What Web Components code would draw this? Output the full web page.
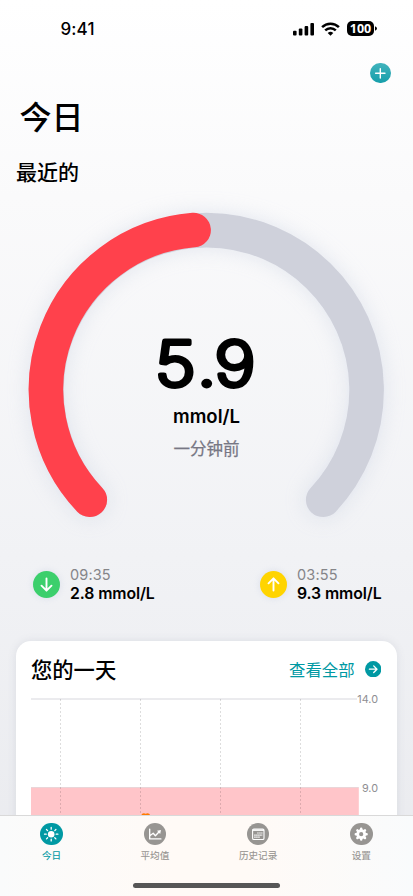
<!DOCTYPE html>
<html lang="zh-CN">
<head>
<meta charset="utf-8">
<meta name="viewport" content="width=device-width">
<title>今日</title>
<style>
html,body{margin:0;height:896px;overflow:hidden}
body{font-family:Inter,"Noto Sans CJK SC",sans-serif;color:#000}
</style>
</head>
<body>
<glucose-app></glucose-app>
<script>
function define(name, html){
  const t=document.createElement('template');
  t.innerHTML=html;
  customElements.define(name,class extends HTMLElement{
    constructor(){super();this.attachShadow({mode:'open'}).append(t.content.cloneNode(true));}
  });
}

define('status-bar',`<style>
:host{display:flex;height:56px;box-sizing:border-box;padding:1px 36px 0 60.5px;align-items:center;justify-content:space-between;font:600 17px/20px Inter,sans-serif}
.time{letter-spacing:.1px;font-weight:550}
.right{display:flex;align-items:center;gap:7px}
.bat{display:flex;align-items:center;gap:1px}
.cell{width:27px;height:15px;border-radius:5px;background:#000;color:#fff;font:700 12.5px/15px "Noto Sans",Inter,sans-serif;text-align:center}
svg{display:block}
</style>
<span class="time">9:41</span>
<div class="right">
<svg width="21" height="14" viewBox="0 0 21 14"><rect x="0" y="8.8" width="3.6" height="4.7" rx="1"/><rect x="5.8" y="6.6" width="3.6" height="6.9" rx="1"/><rect x="11.6" y="4" width="3.6" height="9.5" rx="1"/><rect x="17.4" y="1" width="3.6" height="12.5" rx="1"/></svg>
<svg width="19" height="14" viewBox="0 0 19 14"><g fill="none" stroke="#000" stroke-width="2.5"><path d="M1.1 5.1a12 12 0 0 1 16.8 0"/><path d="M4.2 8.3a7.6 7.6 0 0 1 10.6 0"/></g><path d="M9.5 13.8 6.7 11a4 4 0 0 1 5.6 0z"/></svg>
<div class="bat"><div class="cell">100</div><svg width="2" height="5" viewBox="0 0 2 5"><path d="M0 .3Q2 1 2 2.5T0 4.7z"/></svg></div>
</div>`);

define('add-button',`<style>
:host{display:block;width:20.6px;height:20.6px;border-radius:50%;background:linear-gradient(#42b4bd,#169eaa)}
svg{display:block}
</style><svg width="20.6" height="20.6" viewBox="0 0 20.6 20.6"><path d="M10.3 5.6v9.4M5.6 10.3h9.4" stroke="#fff" stroke-width="1.4" stroke-linecap="round"/></svg>`);

define('glucose-gauge',`<style>
:host{display:grid;height:340px}
svg,.label{grid-area:1/1}
svg{display:block;overflow:visible}
.arcs{filter:drop-shadow(0 0 10px rgba(180,190,215,.33))}
.label{display:flex;flex-direction:column;align-items:center;padding-top:129px}
.value{font-family:Inter,sans-serif;font-size:61.5px;font-weight:200;font-optical-sizing:none}
.unit{font-weight:600;font-size:18.5px;line-height:24px;margin-top:1px}
.when{font-size:16.5px;line-height:24px;margin-top:9.5px;color:#777784;-webkit-text-stroke:.25px #777784}
</style>
<svg class="arcs" width="413" height="340" viewBox="0 200 413 340"><g fill="none" stroke-width="34.6" stroke-linecap="round"><path d="M89.8 499.8A160.1 160.1 0 1 1 323.2 499.8" stroke="#cfd1db"/><path d="M89.8 499.8A160.1 160.1 0 0 1 193.6 230.1" stroke="#ff414c"/></g></svg>
<div class="label">
<svg width="120" height="74" viewBox="0 0 120 74"><text class="value" transform="scale(1.14 1)" x="7.1 43.8 59.3" y="57.2" stroke="#000" stroke-width="4.8" stroke-linejoin="round">5.9</text></svg>
<span class="unit"><slot name="unit"></slot></span><span class="when"><slot name="when"></slot></span></div>`);

define('reading-item',`<style>
:host{display:flex;align-items:center;gap:10px;width:122px}
.dot{width:27px;height:27px;border-radius:50%;background:var(--dot);flex:none;box-shadow:0 0 6px rgba(170,180,215,.3)}
svg{display:block;transform:rotate(var(--turn,0deg))}
.text{white-space:nowrap}
.time{color:#858589;font-size:14.5px;line-height:18px;letter-spacing:.15px}
.value{font-size:15.8px;line-height:18px;font-weight:600;letter-spacing:-.1px;padding-top:1px;margin-bottom:-1px}
</style><div class="dot"><svg width="27" height="27" viewBox="0 0 27 27"><path d="M13.5 7.4v12M8.5 14.7l5 5 5-5" fill="none" stroke="#fff" stroke-width="1.9" stroke-linecap="round" stroke-linejoin="round"/></svg></div>
<div class="text"><div class="time"><slot name="time"></slot></div><div class="value"><slot></slot></div></div>`);

define('day-chart',`<style>
:host{display:block}svg{display:block}text{font-family:Inter,sans-serif;font-size:10.8px;fill:#8e8e92}
</style><svg width="350" height="130" viewBox="31 690 350 130">
<path d="M31 699H357" stroke="#e5e5e8" stroke-width="1.6"/>
<rect x="31" y="787.7" width="327.8" height="40" fill="#ffc5c9"/>
<path d="M31 787.5H358.8" stroke="#e4ced2" stroke-width=".8"/>
<path d="M60.5 699V820M140.5 699V820M220.5 699V820M300.5 699V820" stroke="#000" stroke-opacity=".17" stroke-width=".8" stroke-dasharray="2 2"/>
<circle cx="143.9" cy="815.8" r="2.6" fill="#ff7a00"/><circle cx="147.5" cy="815.8" r="2.6" fill="#ff7a00"/>
<text x="378" y="702.9" text-anchor="end">14.0</text><text x="378" y="791.5" text-anchor="end">9.0</text></svg>`);

define('day-card',`<style>
:host{display:block;height:260px;border-radius:15px;background:#fff;box-shadow:0 0 8px rgba(100,105,130,.13);padding:14px 15px 0;box-sizing:border-box}
header{display:flex;justify-content:space-between;align-items:center;height:28px;margin-bottom:7px}
.title{font-size:21.3px;font-weight:500}
.all{display:flex;align-items:center;gap:10px;color:#0099a3;font-size:16.4px}
svg{display:block;margin:1px 1px 0 0}
</style><header><span class="title"><slot name="title"></slot></span><span class="all"><slot name="link"></slot><svg width="16.4" height="16.4" viewBox="0 0 16.4 16.4"><circle cx="8.2" cy="8.2" r="8.2" fill="#0099a3"/><path d="M4.4 8.2h7.6M8.7 4.9 12 8.2l-3.3 3.3" fill="none" stroke="#fff" stroke-width="1.3" stroke-linecap="round" stroke-linejoin="round"/></svg></span></header><slot></slot>`);

define('tab-item',`<style>
:host{display:flex;flex:1;flex-direction:column;align-items:center;color:var(--tab,#979592);gap:3px}
.icon{width:22.4px;height:22.4px;border-radius:50%;background:var(--tab,#979592)}
.name{font-size:9.6px;line-height:16px;-webkit-text-stroke:.12px}
::slotted(svg){display:block;width:22.4px;height:22.4px}
</style><div class="icon"><slot name="icon"></slot></div><span class="name"><slot></slot></span>`);

define('tab-bar',`<style>
:host{display:block;height:81px;box-sizing:border-box;border-top:1px solid #d9d9d9;background:linear-gradient(90deg,#fafbfb,#fffaf6 42%,#fffaf6 60%,#f9fbfc);padding-top:6.5px}
nav{display:flex;height:50px}
.home{width:147px;height:4.6px;border-radius:3px;background:#565656;margin:10.8px auto 0}
</style><nav><slot></slot></nav><div class="home"></div>`);

define('glucose-app',`<style>
:host{display:grid;grid-template-rows:815px 81px;width:413px;height:896px;overflow:hidden;background:linear-gradient(#fff,#fafafb 22%,#f1f2f5 62%,#e9eaee)}
main{overflow:hidden;min-height:0}
.add{display:flex;justify-content:flex-end;padding:6.5px 22px 0 0;height:27.5px;box-sizing:border-box}
h1{margin:14px 0 0 19.5px;font-size:32px;line-height:40px;font-weight:500}
h2{margin:21.5px 0 0 16px;font-size:21px;line-height:28px;font-weight:500}
glucose-gauge{margin-top:12.5px}
.readings{display:flex;justify-content:space-between;padding:26.5px 31px 0 33px}
day-card{margin:38.5px 16px 0}
</style>
<main><status-bar></status-bar><div class="add"><add-button></add-button></div>
<h1>今日</h1><h2>最近的</h2>
<glucose-gauge><span slot="unit">mmol/L</span><span slot="when">一分钟前</span></glucose-gauge>
<div class="readings"><reading-item style="--dot:#3ccf6c"><span slot="time">09:35</span>2.8 mmol/L</reading-item><reading-item style="--dot:#ffd400;--turn:180deg"><span slot="time">03:55</span>9.3 mmol/L</reading-item></div>
<day-card><span slot="title">您的一天</span><span slot="link">查看全部</span><day-chart></day-chart></day-card></main>
<tab-bar>
<tab-item style="--tab:#0099a3"><svg slot="icon" viewBox="0 0 22.4 22.4"><circle cx="11.2" cy="11.2" r="3.3" fill="#fff"/><path d="M11.2 4.5v1.7M11.2 16.2v1.7M4.5 11.2h1.7M16.2 11.2h1.7M6.5 6.5l1.1 1.1M14.8 14.8l1.1 1.1M6.5 15.9l1.1-1.1M14.8 7.6l1.1-1.1" stroke="#fff" stroke-width="1.3" stroke-linecap="round"/></svg>今日</tab-item>
<tab-item><svg slot="icon" viewBox="0 0 22.4 22.4"><path d="M5.7 6.1v9.8h11.2M6.5 12.2l2.7-2 2.2 2.6 4-4.3" fill="none" stroke="#fff" stroke-width="1.35" stroke-linecap="round" stroke-linejoin="round"/><path d="M13 7.7 17 6.9 16.2 10.9z" fill="#fff"/></svg>平均值</tab-item>
<tab-item><svg slot="icon" viewBox="0 0 22.4 22.4"><rect x="5.6" y="6" width="11.4" height="10.5" rx="1.3" fill="none" stroke="#fff" stroke-width="1.1"/><path d="M5.6 7.1h11.4" stroke="#fff" stroke-width="1.6"/><path d="M10.2 10h5.3M7.2 12.1h8.3M7.2 14.2h6" stroke="#fff" stroke-width="1.2" stroke-dasharray="1.5 .5"/></svg>历史记录</tab-item>
<tab-item><svg slot="icon" viewBox="0 0 22.4 22.4"><circle cx="11.2" cy="11.2" r="3.5" fill="none" stroke="#fff" stroke-width="2.8"/><g stroke="#fff" stroke-width="2.5" stroke-linecap="round"><path d="M11.2 5.8v1M11.2 15.6v1M5.8 11.2h1M15.6 11.2h1M7.4 7.4l.7.7M14.3 14.3l.7.7M7.4 15l.7-.7M14.3 8.1l.7-.7"/></g></svg>设置</tab-item>
</tab-bar>`);
</script>
</body>
</html>
